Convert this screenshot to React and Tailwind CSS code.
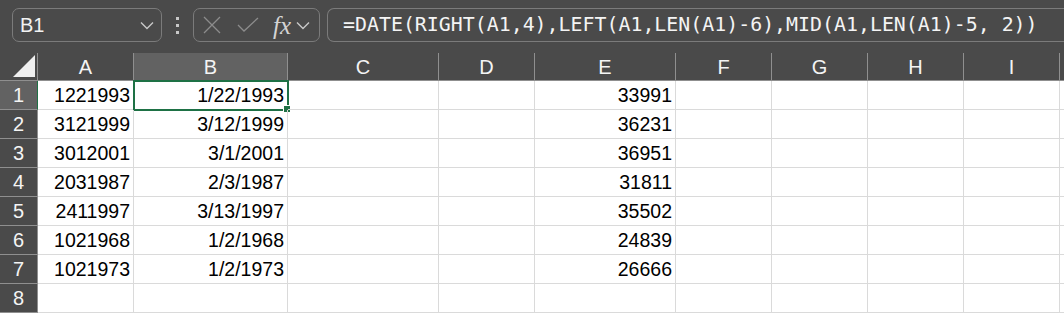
import React from 'react';

const cols = [
    { key: 'A', label: 'A' },
    { key: 'B', label: 'B' },
    { key: 'C', label: 'C' },
    { key: 'D', label: 'D' },
    { key: 'E', label: 'E' },
    { key: 'F', label: 'F' },
    { key: 'G', label: 'G' },
    { key: 'H', label: 'H' },
    { key: 'I', label: 'I' },
    { key: 'J', label: '' },
];

const rows = [
    { A: '1221993', B: '1/22/1993', E: '33991' },
    { A: '3121999', B: '3/12/1999', E: '36231' },
    { A: '3012001', B: '3/1/2001', E: '36951' },
    { A: '2031987', B: '2/3/1987', E: '31811' },
    { A: '2411997', B: '3/13/1997', E: '35502' },
    { A: '1021968', B: '1/2/1968', E: '24839' },
    { A: '1021973', B: '1/2/1973', E: '26666' },
    {},
];

const Chevron = ({ className }) => (
    <svg className={className} width="14" height="9" viewBox="0 0 14 9" fill="none">
        <path d="M1 1.5l6 6 6-6" stroke="currentColor" strokeWidth="1.4" />
    </svg>
);

const FormulaBar = () => (
    <div className="h-[53px] flex items-start pt-[8px] bg-[#4a4a4a]">
        {/* name box */}
        <div className="ml-[12px] w-[150px] h-[34px] rounded-[7px] border border-[#7b7b7b] flex items-center justify-between pl-[7px] pr-[7px] text-[#f2f2f2] text-[20px] font-['Liberation_Sans',sans-serif]">
            <span>B1</span>
            <Chevron className="text-[#c8c8c8]" />
        </div>
        {/* drag dots */}
        <div className="w-[31px] h-[34px] flex flex-col items-center justify-center gap-[4px]">
            <span className="w-[3px] h-[3px] bg-[#c8c8c8]" />
            <span className="w-[3px] h-[3px] bg-[#c8c8c8]" />
            <span className="w-[3px] h-[3px] bg-[#c8c8c8]" />
        </div>
        {/* cancel / enter / fx */}
        <div className="w-[127px] h-[34px] rounded-[7px] border border-[#7b7b7b] flex items-center pl-[9px] text-[#8c8c8c]">
            <svg width="18" height="18" viewBox="0 0 18 18" fill="none">
                <path d="M1 1l16 16M17 1L1 17" stroke="currentColor" strokeWidth="1.3" />
            </svg>
            <svg className="ml-[16px]" width="22" height="16" viewBox="0 0 22 16" fill="none">
                <path d="M1 8l6 6L21 1" stroke="currentColor" strokeWidth="1.3" />
            </svg>
            <span className="ml-[14px] text-[#d4d4d4] italic text-[25px] leading-none font-['Liberation_Serif',serif]">fx</span>
            <Chevron className="ml-[5px] text-[#c8c8c8]" />
        </div>
        {/* formula input */}
        <div className="ml-[7px] flex-1 h-[34px] rounded-l-[7px] border border-r-0 border-[#7b7b7b] flex items-center pl-[15px] text-[#f4f4f4] text-[19.9px] font-['DejaVu_Sans_Mono',monospace] whitespace-nowrap overflow-hidden">
            =DATE(RIGHT(A1,4),LEFT(A1,LEN(A1)-6),MID(A1,LEN(A1)-5, 2))
        </div>
    </div>
);

const App = () => {
    return (
        <div className="w-[1064px] h-[314px] overflow-hidden bg-white font-['Liberation_Sans',sans-serif]">
            <FormulaBar />
            <div className="grid grid-cols-[38px_96px_154px_151px_96px_141px_96px_96px_96px_96px_96px] grid-rows-[28px_repeat(8,29px)]">
                {/* corner */}
                <div className="bg-[#4a4a4a] border-r border-b border-[#8f8f8f] flex items-end justify-end pr-[2px] pb-[3px]">
                    <svg width="22" height="22" viewBox="0 0 22 22">
                        <path d="M22 0V22H0Z" fill="#efefef" />
                    </svg>
                </div>
                {cols.map((c) => (
                    <div
                        key={c.key}
                        className={`flex items-center justify-center text-[20px] text-[#f4f4f4] border-b border-r ${c.key === 'B' ? 'bg-[#626262] border-r-[#8f8f8f] border-b-[#1e7145]' : 'bg-[#4a4a4a] border-[#8f8f8f]'}`}
                    >
                        {c.label}
                    </div>
                ))}
                {rows.map((r, i) => (
                    <React.Fragment key={i}>
                        <div
                            className={`flex items-center justify-center text-[20px] text-[#f4f4f4] border-r border-b border-[#8f8f8f] ${i === 0 ? 'bg-[#626262] border-r-[#1e7145]' : 'bg-[#4a4a4a]'}`}
                        >
                            {i + 1}
                        </div>
                        {cols.map((c) => (
                            <div
                                key={c.key}
                                className="relative border-r border-b border-[#dadada] flex items-center justify-end pr-[3px] pt-[2px] text-[19.5px] text-black"
                            >
                                {r[c.key] || ''}
                                {i === 0 && c.key === 'B' && (
                                    <>
                                        <div className="absolute top-[-1px] left-[-1px] right-[-2px] bottom-[-2px] border-2 border-[#1e7145]" />
                                        <div className="absolute right-[-4px] bottom-[-4px] w-[8px] h-[8px] bg-[#1e7145] border border-white" />
                                    </>
                                )}
                            </div>
                        ))}
                    </React.Fragment>
                ))}
            </div>
        </div>
    );
};

export default App;
